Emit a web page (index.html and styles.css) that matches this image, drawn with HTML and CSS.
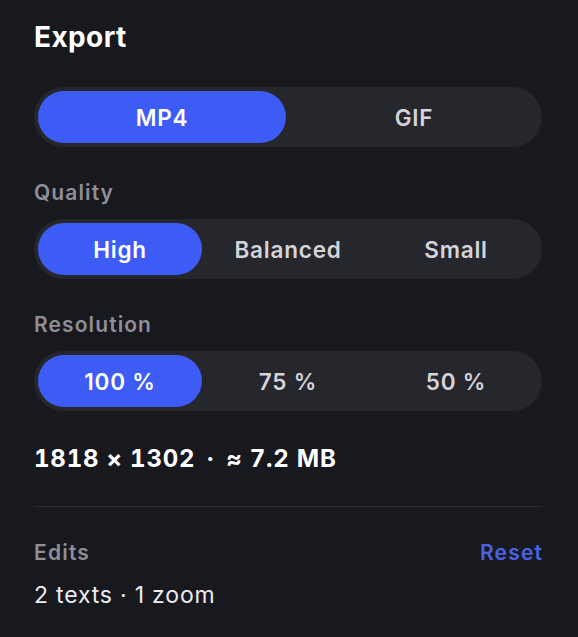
FILE: index.html
```html
<!DOCTYPE html>
<html lang="en">
<head>
<meta charset="utf-8">
<title>Export</title>
<link rel="stylesheet" href="styles.css">
</head>
<body>
<div class="panel">
  <h1 class="title">Export</h1>

  <div class="seg seg-2">
    <button class="opt active">MP4</button>
    <button class="opt">GIF</button>
  </div>

  <div class="label">Quality</div>
  <div class="seg seg-3">
    <button class="opt active">High</button>
    <button class="opt">Balanced</button>
    <button class="opt">Small</button>
  </div>

  <div class="label">Resolution</div>
  <div class="seg seg-3">
    <button class="opt active">100 %</button>
    <button class="opt">75 %</button>
    <button class="opt">50 %</button>
  </div>

  <div class="stats"><span>1818 × 1302</span><span class="dot">·</span><span>≈ 7.2 MB</span></div>

  <hr class="divider">

  <div class="edits-row">
    <span class="label-inline">Edits</span>
    <a class="reset">Reset</a>
  </div>
  <div class="edits-info">2 texts · 1 zoom</div>
</div>
</body>
</html>
```

FILE: styles.css
```css
html, body {
  margin: 0;
  padding: 0;
  background: #18181f;
  height: 100%;
}

body {
  font-family: Inter, "Noto Sans", "Liberation Sans", sans-serif;
  color: #ffffff;
}

.panel {
  width: 508px;
  padding: 20px 0 0 34px;
  display: flex;
  flex-direction: column;
}

.title {
  margin: 0;
  font-size: 28px;
  line-height: 34px;
  font-weight: 700;
  color: #ffffff;
  letter-spacing: 0.4px;
}

.seg {
  margin-top: 33px;
  height: 60px;
  box-sizing: border-box;
  padding: 4px;
  border-radius: 30px;
  background: #26262d;
  display: grid;
  gap: 4px;
}

.seg-2 { grid-template-columns: 1fr 1fr; }
.seg-3 { grid-template-columns: 1fr 1fr 1fr; }

.label + .seg { margin-top: 13px; }

.opt {
  border: 0;
  margin: 0;
  padding: 0;
  background: transparent;
  border-radius: 26px;
  font-family: inherit;
  font-size: 22.5px;
  font-weight: 600;
  letter-spacing: 0.8px;
  color: #d4d4da;
  cursor: pointer;
}

.opt.active {
  background: #3d5bf5;
  color: #ffffff;
}

.label {
  margin-top: 33px;
  font-size: 21px;
  line-height: 26px;
  font-weight: 600;
  letter-spacing: 1.1px;
  color: #8f8f97;
}

.stats {
  margin-top: 34px;
  font-size: 24px;
  line-height: 28px;
  font-weight: 700;
  letter-spacing: 0.8px;
  font-variant-numeric: tabular-nums;
  color: #ffffff;
  display: flex;
  align-items: baseline;
}

.stats .dot {
  margin: 0 11px 0 11px;
}

.divider {
  margin: 33px 0 0 0;
  border: 0;
  height: 1px;
  background: #2c2c34;
}

.edits-row {
  margin-top: 33px;
  display: flex;
  justify-content: space-between;
  align-items: baseline;
  font-size: 21px;
  line-height: 26px;
  font-weight: 600;
  letter-spacing: 1.2px;
}

.label-inline { color: #8f8f97; }

.reset {
  color: #4a63e6;
  cursor: pointer;
  margin-right: -1.2px;
}

.edits-info {
  margin-top: 15px;
  font-size: 23px;
  line-height: 28px;
  font-weight: 400;
  letter-spacing: 0.8px;
  color: #ececf0;
}
```
